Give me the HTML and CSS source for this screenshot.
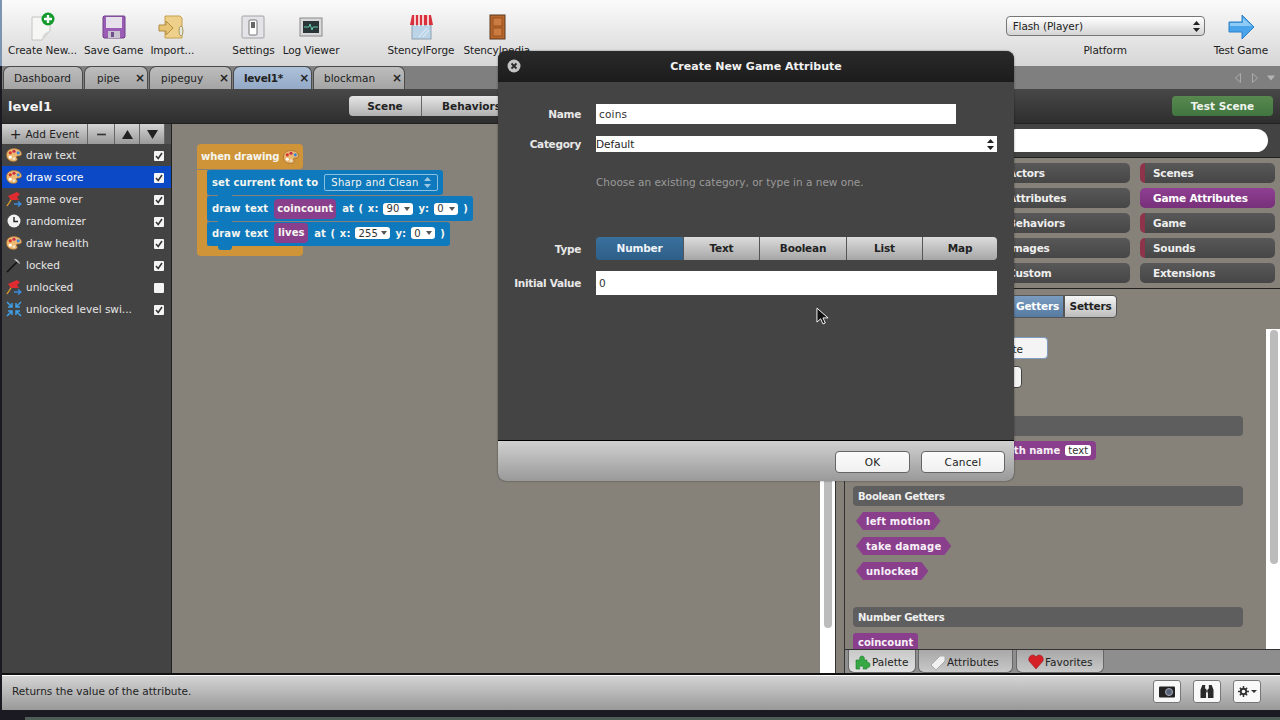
FILE: index.html
```html
<!DOCTYPE html>
<html lang="en">
<head>
    <meta charset="UTF-8">
    <meta name="viewport" content="width=device-width, initial-scale=1.0">
    <title>Stencyl - level1</title>
    <link rel="stylesheet" href="styles.css">
</head>
<body>
    <svg class="defs" width="0" height="0">
        <symbol id="i-palette" viewBox="0.5 1.5 15 13">
            <path d="M1 8c0-4 3-6 7-6s7 2 7 5c0 2-2 2-3.500 2-1.500 0-1.500 1.500-.5 2.500.5 1.500-1 2.500-3.500 2.500C3.500 14 1 11.500 1 8z" fill="#edb871" stroke="#9a6a30" stroke-width=".7"/>
            <circle cx="4.500" cy="6" r="1.500" fill="#d8342c"/>
            <circle cx="8" cy="4.500" r="1.500" fill="#c62f50"/>
            <circle cx="12" cy="6" r="1.500" fill="#3b88d8"/>
            <circle cx="4.500" cy="10" r="1.400" fill="#fff"/>
            <circle cx="8" cy="11.500" r="1.300" fill="#e9e2c8"/>
        </symbol>
        <symbol id="i-flag" viewBox="0 0 16 16">
            <path d="M1 15L7 6" stroke="#e8a030" stroke-width="1.300" fill="none"/>
            <path d="M2 5l9-4 3 2-3 3 2 3-8 0z" fill="#e02c30"/>
            <path d="M8 13h6M12 10.500l3 2.500-3 2.500" stroke="#3d8be0" stroke-width="1.400" fill="none"/>
        </symbol>
        <symbol id="i-check" viewBox="0 0 10 10">
            <path d="M2 5l2.200 2.500L8 2" stroke="#333" stroke-width="1.500" fill="none"/>
        </symbol>
    </svg>

    <div class="app">
        <header class="toolbar">
            <div class="tool">
                <svg class="tool-icon" viewBox="0 0 32 32">
                    <path d="M6 6h18v14l-8 9H6z" fill="#f6f6f4" stroke="#c4c4c4"/>
                    <path d="M16 29c0-5 3-8 8-9z" fill="#d8d8d8"/>
                    <circle cx="22" cy="8" r="6.500" fill="#149a2c"/>
                    <path d="M22 4v8M18 8h8" stroke="#fff" stroke-width="2.400"/>
                </svg>
                <span>Create New...</span>
            </div>
            <div class="tool">
                <svg class="tool-icon" viewBox="0 0 32 32">
                    <path d="M6 5h20a1 1 0 0 1 1 1v20l-1 1H6l-1-1V6z" fill="#9a5cb4" stroke="#70408a"/>
                    <rect x="8" y="6" width="16" height="11" fill="#e6e0ea"/>
                    <rect x="10" y="20" width="12" height="7" fill="#c9c2cf"/>
                    <rect x="13" y="21" width="3" height="5" fill="#70508a"/>
                </svg>
                <span>Save Game</span>
            </div>
            <div class="tool">
                <svg class="tool-icon" viewBox="0 0 32 32">
                    <path d="M9 5h15l2 2v20H9z" fill="#eed08a" stroke="#c4a050"/>
                    <path d="M3 14h7v-4l7 7-7 7v-4H3z" fill="#e6c474" stroke="#b08c40"/>
                    <ellipse cx="25" cy="20" rx="2" ry="5" fill="#e6e6d8" stroke="#a89860"/>
                </svg>
                <span>Import...</span>
            </div>
            <div class="tool group-start">
                <svg class="tool-icon" viewBox="0 0 32 32">
                    <rect x="5" y="5" width="22" height="22" rx="1" fill="#e4e4e8" stroke="#a4a4a8"/>
                    <rect x="12" y="9" width="8" height="15" rx="1" fill="#fff" stroke="#777"/>
                    <rect x="14" y="11" width="4" height="6" fill="#666"/>
                </svg>
                <span>Settings</span>
            </div>
            <div class="tool tool-log">
                <svg class="tool-icon" viewBox="0 0 32 32">
                    <rect x="5" y="7" width="22" height="18" fill="#d8d8d8" stroke="#8a8a8a"/>
                    <rect x="8" y="10" width="16" height="12" fill="#2a3538"/>
                    <path d="M9 16h5l1-3 2 6 1-3h5" stroke="#62c8a8" fill="none"/>
                </svg>
                <span>Log Viewer</span>
            </div>
            <div class="tool group-wide">
                <svg class="tool-icon" viewBox="0 0 32 32">
                    <rect x="7" y="14" width="19" height="14" fill="#bcd4e8" stroke="#8ea0b0"/>
                    <path d="M14 26l8-9M18 26l6-7" stroke="#e8f2fa"/>
                    <path d="M7 4h19l2 10H5z" fill="#d8303c"/>
                    <path d="M10 4v11M14 4v11M18 4v11M23 4v11" stroke="#fff" stroke-width="1.500"/>
                </svg>
                <span>StencylForge</span>
            </div>
            <div class="tool tool-pedia">
                <svg class="tool-icon" viewBox="0 0 32 32">
                    <rect x="9" y="4" width="15" height="24" fill="#b8672c" stroke="#5a3a20"/>
                    <rect x="12" y="7" width="9" height="8" fill="#cc7c40" stroke="#96521f"/>
                    <rect x="12" y="17" width="9" height="8" fill="#cc7c40" stroke="#96521f"/>
                </svg>
                <span>Stencylpedia</span>
            </div>
            <div class="tool platform">
                <div class="platform-select">
                    <span>Flash (Player)</span>
                    <svg class="updown" viewBox="0 0 7 11"><path d="M3.500 0L7 4H0zM3.500 11L0 7h7z" fill="#222"/></svg>
                </div>
                <span>Platform</span>
            </div>
            <div class="tool test-game">
                <svg class="tool-icon" viewBox="0 0 32 32">
                    <path d="M4 11h13V4l12 12-12 12v-7H4z" fill="#4aa4ea" stroke="#2c80c8"/>
                    <path d="M5 12h13V7l9 8H5z" fill="#8ecbf6"/>
                </svg>
                <span>Test Game</span>
            </div>
        </header>

        <nav class="tabbar">
            <div class="tab tab-home">Dashboard</div>
            <div class="tab tab-pipe"><span>pipe</span><b>×</b></div>
            <div class="tab tab-pipeguy"><span>pipeguy</span><b>×</b></div>
            <div class="tab tab-level active"><span>level1*</span><b>×</b></div>
            <div class="tab tab-blockman"><span>blockman</span><b>×</b></div>
            <div class="tab-arrows">
                <svg viewBox="0 0 6 10"><path d="M5.500 .5L.5 5l5 4.500z" fill="none" stroke="#aaa"/></svg>
                <svg viewBox="0 0 6 10"><path d="M.5 .5L5.500 5 .5 9.500z" fill="none" stroke="#aaa"/></svg>
                <svg class="arrow-down" viewBox="0 0 10 6"><path d="M0 0h10L5 6z" fill="#b4b4b4"/></svg>
            </div>
        </nav>

        <div class="scene-head">
            <div class="scene-title">level1</div>
            <div class="scene-modes">
                <div class="mode">Scene</div>
                <div class="mode mode-wide">Behaviors</div>
            </div>
            <div class="test-scene">Test Scene</div>
        </div>

        <main class="workspace">
            <aside class="events">
                <div class="events-bar">
                    <div class="ev-btn ev-add"><b>+</b> Add Event</div>
                    <div class="ev-btn ev-small"><svg viewBox="0 0 10 10"><path d="M1 5h8" stroke="#333" stroke-width="1.500"/></svg></div>
                    <div class="ev-btn ev-small"><svg viewBox="0 0 10 10"><path d="M5 1l5 8H0z" fill="#222"/></svg></div>
                    <div class="ev-btn ev-small"><svg viewBox="0 0 10 10"><path d="M5 9L0 1h10z" fill="#222"/></svg></div>
                </div>
                <div class="event"><svg class="ev-icon"><use href="#i-palette"/></svg><span>draw text</span><i class="box"><svg><use href="#i-check"/></svg></i></div>
                <div class="event selected"><svg class="ev-icon"><use href="#i-palette"/></svg><span>draw score</span><i class="box"><svg><use href="#i-check"/></svg></i></div>
                <div class="event"><svg class="ev-icon"><use href="#i-flag"/></svg><span>game over</span><i class="box"><svg><use href="#i-check"/></svg></i></div>
                <div class="event">
                    <svg class="ev-icon" viewBox="0 0 16 16"><circle cx="8" cy="8" r="6.500" fill="#f2f2f2"/><path d="M8 4v4.500h4" stroke="#222" stroke-width="1.400" fill="none"/></svg>
                    <span>randomizer</span><i class="box"><svg><use href="#i-check"/></svg></i>
                </div>
                <div class="event"><svg class="ev-icon"><use href="#i-palette"/></svg><span>draw health</span><i class="box"><svg><use href="#i-check"/></svg></i></div>
                <div class="event">
                    <svg class="ev-icon" viewBox="0 0 16 16"><path d="M1 15L11 5" stroke="#111" stroke-width="1.600"/><path d="M8 2c3 0 5 2 6 5l-4-3z" fill="#ddd" stroke="#999" stroke-width=".5"/></svg>
                    <span>locked</span><i class="box"><svg><use href="#i-check"/></svg></i>
                </div>
                <div class="event"><svg class="ev-icon"><use href="#i-flag"/></svg><span>unlocked</span><i class="box"></i></div>
                <div class="event">
                    <svg class="ev-icon" viewBox="0 0 16 16"><path d="M1 1l5 5M6 2v4H2M15 1l-5 5M10 2v4h4M1 15l5-5M6 14v-4H2M15 15l-5-5M10 14v-4h4" stroke="#3fa0e8" stroke-width="1.500" fill="none"/></svg>
                    <span>unlocked level swi...</span><i class="box"><svg><use href="#i-check"/></svg></i>
                </div>
            </aside>

            <section class="canvas">
                <div class="hat">
                    <div class="hat-head">when drawing <svg class="hat-icon"><use href="#i-palette"/></svg></div>
                    <div class="hat-body">
                        <div class="stmt stmt-first">set current font to <span class="font-pick">Sharp and Clean <svg class="updown" viewBox="0 0 7 11"><path d="M3.500 0L7 4H0zM3.500 11L0 7h7z" fill="#9cc8e4"/></svg></span></div>
                        <div class="stmt">draw text <span class="attr attr-wide">coincount</span> at ( x: <span class="num num-90">90<em></em></span> y: <span class="num">0<em></em></span> )</div>
                        <div class="stmt stmt-last">draw text <span class="attr">lives</span> at ( x: <span class="num num-255">255<em></em></span> y: <span class="num">0<em></em></span> )</div>
                    </div>
                    <div class="hat-foot"></div>
                </div>
            </section>

            <div class="canvas-scroll"><div class="thumb thumb-canvas"></div></div>
            <div class="gutter"></div>

            <section class="palette">
                <div class="search-row"><div class="search"></div></div>
                <div class="categories">
                    <div class="cat-col">
                        <div class="cat mark">Actors</div>
                        <div class="cat mark">Attributes</div>
                        <div class="cat mark">Behaviors</div>
                        <div class="cat mark">Images</div>
                        <div class="cat">Custom</div>
                    </div>
                    <div class="cat-col">
                        <div class="cat mark">Scenes</div>
                        <div class="cat cat-on">Game Attributes</div>
                        <div class="cat mark">Game</div>
                        <div class="cat mark">Sounds</div>
                        <div class="cat">Extensions</div>
                    </div>
                </div>
                <div class="filters">
                    <div class="filter filter-on">Getters</div>
                    <div class="filter">Setters</div>
                </div>
                <div class="palette-main">
                    <div class="blocks">
                        <div class="attr-btn attr-btn-blue">Create</div>
                        <div class="attr-btn attr-btn-plain"></div>
                        <div class="section section-first">Getters</div>
                        <div class="getter-row"><span class="getter-pill">get attribute with name <span class="slot">text</span></span></div>
                        <div class="section">Boolean Getters</div>
                        <div class="hex">left motion</div>
                        <div class="hex">take damage</div>
                        <div class="hex">unlocked</div>
                        <div class="section section-num">Number Getters</div>
                        <div class="num-getter">coincount</div>
                    </div>
                    <div class="palette-scroll"><div class="thumb thumb-palette"></div></div>
                </div>
                <div class="palette-tabs">
                    <div class="ptab ptab-on">
                        <svg viewBox="0 0 16 16"><path d="M1 6h4c-1-2 0-4 2-4s3 2 2 4h3v3c2-1 3 0 3 2s-1 3-3 2v2H8c1-2 0-3-2-3s-2 2-1 3H1z" fill="#36a844" stroke="#1e7a2c" stroke-width=".6"/></svg>
                        Palette
                    </div>
                    <div class="ptab ptab-attr">
                        <svg viewBox="0 0 16 16"><path d="M1 11L10 2h5v5l-9 9z" fill="#f0f0f0" stroke="#aaa"/></svg>
                        Attributes
                    </div>
                    <div class="ptab ptab-fav">
                        <svg viewBox="0 0 16 16"><path d="M8 15L1 7c-1-3 1-6 4-6 1.500 0 2.500 1 3 2 .5-1 1.500-2 3-2 3 0 5 3 4 6z" fill="#d62028" stroke="#8c1418" stroke-width=".5"/></svg>
                        Favorites
                    </div>
                </div>
            </section>
        </main>

        <footer class="status">
            <span>Returns the value of the attribute.</span>
            <div class="status-btns">
                <div class="status-btn">
                    <svg viewBox="0 0 16 12"><rect x="0" y="1" width="16" height="11" rx="1" fill="#222"/><circle cx="10" cy="6.500" r="3.500" fill="#5a6478" stroke="#aab"/></svg>
                </div>
                <div class="status-btn">
                    <svg viewBox="0 0 16 14"><path d="M3 0h3v4h1v10H1V5zM10 0h3l2 5v9H9V4h1z" fill="#2a2a2a"/><rect x="7" y="5" width="2" height="3" fill="#555"/></svg>
                </div>
                <div class="status-btn">
                    <svg class="gear" viewBox="0 0 12 12"><circle cx="6" cy="6" r="3" fill="none" stroke="#333" stroke-width="2"/><path d="M6 0v3M6 9v3M0 6h3M9 6h3M2 2l2 2M8 8l2 2M10 2L8 4M4 8l-2 2" stroke="#333" stroke-width="1.600"/></svg>
                    <svg class="caret" viewBox="0 0 6 3"><path d="M0 0h6L3 3z" fill="#333"/></svg>
                </div>
            </div>
        </footer>
    </div>
    <div class="desktop-strip"></div>

    <div class="dialog">
        <div class="dialog-title">
            <svg class="dialog-close" viewBox="0 0 14 14"><circle cx="7" cy="7" r="6.500" fill="#c4c4c4"/><path d="M4.500 4.500l5 5M9.500 4.500l-5 5" stroke="#2a2a2a" stroke-width="1.800"/></svg>
            Create New Game Attribute
        </div>
        <div class="dialog-body">
            <div class="field field-name">
                <label>Name</label>
                <input class="text-input name-input" type="text" value="coins">
            </div>
            <div class="field field-category">
                <label>Category</label>
                <div class="combo">Default <svg class="updown" viewBox="0 0 7 11"><path d="M3.500 0L7 4H0zM3.500 11L0 7h7z" fill="#222"/></svg></div>
            </div>
            <p class="hint">Choose an existing category, or type in a new one.</p>
            <div class="field field-type">
                <label>Type</label>
                <div class="types">
                    <div class="type type-on">Number</div>
                    <div class="type">Text</div>
                    <div class="type type-mid">Boolean</div>
                    <div class="type">List</div>
                    <div class="type">Map</div>
                </div>
            </div>
            <div class="field field-value">
                <label>Initial Value</label>
                <input class="text-input value-input" type="text" value="0">
            </div>
        </div>
        <div class="dialog-foot">
            <div class="dlg-btn dlg-ok">OK</div>
            <div class="dlg-btn dlg-cancel">Cancel</div>
        </div>
    </div>

    <svg class="cursor" viewBox="0 0 14 20"><path d="M1 1v15l4-3.500 2.500 5.500 2.500-1-2.500-5.500H13z" fill="#111" stroke="#fff"/></svg>
</body>
</html>
```

FILE: styles.css
```css
* {
    box-sizing: border-box;
}
html, body {
    margin: 0;
    height: 720px;
    overflow: hidden;
}
body {
    position: relative;
    font-family: "DejaVu Sans", sans-serif;
    font-size: 10.5px;
    color: #222;
    background: linear-gradient(#7c93b2 0, #7c93b2 66px, #1b1a22 66px, #1b1a22 100%);
}
.defs {
    position: absolute;
}
.app {
    margin-left: 2px;
    height: 710px;
    display: flex;
    flex-direction: column;
}

/* top toolbar */
.toolbar {
    height: 66px;
    flex: none;
    display: flex;
    padding: 11px 12px 0 6px;
    background: linear-gradient(#fbfbfb, #d6d6d6);
}
.tool {
    display: flex;
    flex-direction: column;
    align-items: center;
    margin-right: 7px;
    white-space: nowrap;
    letter-spacing: -.1px;
}
.tool-icon {
    width: 32px;
    height: 32px;
    margin-bottom: 1px;
}
.group-start {
    margin-left: 31px;
}
.tool-log {
    margin-left: 1px;
}
.group-wide {
    margin-left: 41px;
}
.tool-pedia {
    margin-left: 2px;
}
.platform {
    width: 199px;
    margin-left: auto;
    margin-right: 9px;
    margin-top: 5px;
}
.platform-select {
    width: 199px;
    height: 20px;
    margin-bottom: 8px;
    padding: 0 4px 0 6px;
    display: flex;
    align-items: center;
    justify-content: space-between;
    border: 1px solid #777;
    border-radius: 4px;
    background: linear-gradient(#fff, #d4d4d4);
}
.updown {
    width: 7px;
    height: 11px;
    flex: none;
}
.test-game {
    margin-right: 0;
}

/* tabs */
.tabbar {
    height: 23px;
    flex: none;
    display: flex;
    padding-left: 1px;
    background: #7f7f7f;
}
.tab {
    height: 23px;
    margin-right: 1px;
    padding: 0 2px 0 12px;
    display: flex;
    align-items: center;
    justify-content: space-between;
    border: 1px solid #4a4a4a;
    border-bottom: 0;
    border-radius: 7px 7px 0 0;
    background: linear-gradient(#bdbdbd, #a4a4a4);
    color: #222;
}
.tab b {
    font-size: 12px;
    line-height: 1;
}
.tab-home {
    width: 80px;
    padding-left: 10px;
}
.tab-pipe {
    width: 64px;
}
.tab-pipeguy {
    width: 83px;
    padding-left: 11px;
}
.tab-level {
    width: 79px;
    padding-left: 10px;
    font-weight: bold;
    letter-spacing: -.3px;
}
.tab-blockman {
    width: 92px;
    padding-left: 10px;
}
.active {
    background: linear-gradient(#aec1da, #93a9c6);
}
.tab-arrows {
    margin-left: auto;
    padding-right: 5px;
    display: flex;
    align-items: center;
    gap: 11px;
}
.tab-arrows svg {
    width: 6px;
    height: 10px;
}
.tab-arrows .arrow-down {
    width: 8px;
    height: 6px;
    margin-left: -2px;
}

/* scene header */
.scene-head {
    height: 34px;
    flex: none;
    display: flex;
    align-items: center;
    padding: 0 7px 0 6px;
    background: linear-gradient(#484848, #2e2e2e);
}
.scene-title {
    width: 341px;
    font-size: 13px;
    font-weight: bold;
    color: #f4f4f4;
}
.scene-modes {
    display: flex;
}
.mode {
    width: 73px;
    height: 20px;
    line-height: 20px;
    text-align: center;
    font-weight: bold;
    border-radius: 4px 0 0 4px;
    border-right: 1px solid #666;
    background: linear-gradient(#e6e6e6, #b0b0b0);
}
.mode-wide {
    width: 100px;
    border-radius: 0;
}
.test-scene {
    width: 101px;
    height: 20px;
    margin-left: auto;
    line-height: 20px;
    text-align: center;
    font-weight: bold;
    color: #f0f4ee;
    border-radius: 4px;
    background: linear-gradient(#58894f, #417540);
}

/* body of the window */
.workspace {
    flex: 1;
    min-height: 0;
    display: flex;
    border-top: 1px solid #222;
    border-bottom: 2px solid #111;
}
.events {
    width: 170px;
    flex: none;
    background: #434343;
    border-right: 1px solid #222;
}
.events-bar {
    height: 20px;
    display: flex;
    background: #555;
}
.ev-btn {
    height: 20px;
    display: flex;
    align-items: center;
    justify-content: center;
    border-right: 1px solid #666;
    background: linear-gradient(#d4d4d4, #9a9a9a);
}
.ev-add {
    width: 86px;
}
.ev-add b {
    margin-right: 4px;
    font-size: 14px;
    font-weight: normal;
}
.ev-small {
    width: 27px;
}
.ev-small + .ev-small {
    width: 25px;
}
.ev-small svg {
    width: 11px;
    height: 11px;
}
.event {
    height: 22px;
    padding: 0 7px 0 4px;
    display: flex;
    align-items: center;
    color: #e6e6e6;
}
.event span {
    flex: 1;
    margin-left: 4px;
    white-space: nowrap;
}
.selected {
    background: #0b49c6;
    color: #fff;
}
.ev-icon {
    width: 16px;
    height: 16px;
    flex: none;
}
.box {
    width: 10px;
    height: 10px;
    margin-top: 1px;
    flex: none;
    background: #f4f4f4;
    border-radius: 1px;
}
.box svg {
    display: block;
    width: 10px;
    height: 10px;
}

/* block canvas */
.canvas {
    position: relative;
    width: 648px;
    flex: none;
    background: #86827a;
}
.hat {
    position: absolute;
    left: 25px;
    top: 20px;
    font-size: 10px;
    font-weight: bold;
    color: #f6f6f0;
    white-space: nowrap;
}
.hat-head {
    width: 106px;
    height: 25px;
    margin-bottom: 1px;
    padding-left: 4px;
    display: flex;
    align-items: center;
    gap: 4px;
    background: #cf9438;
    border-radius: 4px 4px 4px 0;
    letter-spacing: -.1px;
}
.hat-icon {
    width: 16px;
    height: 16px;
}
.hat-body {
    display: flex;
    flex-direction: column;
    align-items: flex-start;
    gap: 1px;
    border-left: 10px solid #cf9438;
}
.stmt {
    height: 25px;
    padding: 0 5px;
    display: flex;
    align-items: center;
    gap: 5px;
    background: #0e79bd;
    border-radius: 3px;
    position: relative;
    letter-spacing: .1px;
    word-spacing: 1px;
}
.stmt-first {
    gap: 6px;
    word-spacing: 0;
}
.stmt-last {
    height: 24px;
    padding-bottom: 2px;
}
.stmt::after {
    content: "";
    position: absolute;
    left: 11px;
    bottom: -4px;
    width: 14px;
    height: 5px;
    background: #0e79bd;
    border-radius: 0 0 3px 3px;
    z-index: 1;
}
.font-pick {
    width: 114px;
    height: 17px;
    padding: 0 6px;
    display: flex;
    align-items: center;
    justify-content: space-between;
    font-weight: normal;
    letter-spacing: .3px;
    word-spacing: 0;
    border: 1px solid #8cc0e0;
    border-radius: 2px;
}
.attr {
    width: 34px;
    height: 20px;
    margin: 0 1px;
    line-height: 20px;
    text-align: center;
    background: #8a3f8c;
    border-radius: 4px;
}
.attr-wide {
    width: 62px;
}
.num {
    width: 24px;
    height: 12px;
    padding: 0 3px;
    display: flex;
    align-items: center;
    justify-content: space-between;
    color: #333;
    font-weight: normal;
    background: #fff;
    border-radius: 3px;
}
.num-90 {
    width: 30px;
}
.num-255 {
    width: 35px;
}
.num em {
    border: 3px solid transparent;
    border-top: 4px solid #555;
    border-bottom: 0;
}
.hat-foot {
    width: 106px;
    height: 10px;
    background: #cf9438;
    border-radius: 0 0 4px 4px;
}

.canvas-scroll {
    width: 15px;
    flex: none;
    padding: 4px;
    background: #fff;
}
.thumb {
    width: 8px;
    background: #bcbcbc;
    border-radius: 4px;
}
.thumb-canvas {
    height: 500px;
}
.gutter {
    width: 10px;
    flex: none;
    background: #86827a;
    border-left: 1px solid #333;
    border-right: 1px solid #333;
}

/* right hand palette */
.palette {
    flex: 1;
    min-width: 0;
    display: flex;
    flex-direction: column;
    background: #86827a;
}
.search-row {
    height: 34px;
    padding: 5px 12px 0 160px;
    background: #434343;
    border-bottom: 1px solid #222;
}
.search {
    height: 23px;
    background: #fff;
    border-radius: 12px;
}
.categories {
    height: 131px;
    flex: none;
    display: flex;
    justify-content: flex-end;
    gap: 10px;
    padding: 5px 5px 0 0;
    border-bottom: 1px solid #222;
}
.cat-col {
    width: 135px;
    display: flex;
    flex-direction: column;
    gap: 5px;
}
.cat {
    height: 20px;
    line-height: 21px;
    padding-left: 13px;
    font-weight: bold;
    letter-spacing: -.2px;
    color: #eeeeee;
    border-radius: 5px;
    background: linear-gradient(#585858, #464646);
}
.mark {
    border-left: 5px solid #8e3349;
    padding-left: 8px;
}
.cat-on {
    color: #fff;
    background: linear-gradient(#8f3f92, #773079);
}
.filters {
    height: 40px;
    flex: none;
    display: flex;
    justify-content: flex-start;
    padding: 6px 0 0 166px;
}
.filter {
    width: 53px;
    height: 23px;
    line-height: 20px;
    text-align: center;
    font-weight: bold;
    letter-spacing: -.2px;
    border: 1px solid #555;
    border-radius: 0 4px 4px 0;
    background: linear-gradient(#f6f6f6, #bcbcbc);
}
.filter-on {
    color: #fff;
    border-radius: 4px 0 0 4px;
    background: linear-gradient(#7a9cc0, #567aa0);
}
.palette-main {
    flex: 1;
    min-height: 0;
    display: flex;
    overflow: hidden;
}
.blocks {
    flex: 1;
    min-width: 0;
    padding: 8px 23px 0 8px;
}
.attr-btn {
    height: 22px;
    line-height: 22px;
    padding-right: 24px;
    text-align: right;
    background: #f4f4f4;
    border-radius: 4px;
}
.attr-btn-blue {
    width: 195px;
    border: 1px solid #7f9cc0;
}
.attr-btn-plain {
    width: 169px;
    margin-top: 7px;
    border: 1px solid #444;
}
.section {
    height: 20px;
    line-height: 21px;
    padding-left: 5px;
    font-size: 10px;
    font-weight: bold;
    letter-spacing: -.3px;
    color: #f0f0f0;
    background: #5e5e5e;
    border-radius: 4px;
}
.section-first {
    margin-top: 28px;
}
.getter-row {
    height: 50px;
    padding: 5px 0 0 20px;
}
.getter-pill {
    display: inline-flex;
    align-items: center;
    gap: 5px;
    height: 19px;
    padding: 0 5px;
    font-size: 10px;
    font-weight: bold;
    color: #f6f0f6;
    white-space: nowrap;
    background: #8a3f8c;
    border-radius: 4px;
    margin-left: 47px;
}
.slot {
    padding: 0 3px;
    font-weight: normal;
    color: #333;
    background: #fff;
    border-radius: 3px;
}
.hex {
    width: fit-content;
    height: 18px;
    line-height: 19px;
    margin: 6px 0 7px 3px;
    padding: 0 10px;
    font-size: 10px;
    font-weight: bold;
    letter-spacing: .2px;
    color: #f8f0f8;
    background: #8a3f8c;
    clip-path: polygon(7px 0, calc(100% - 7px) 0, 100% 50%, calc(100% - 7px) 100%, 7px 100%, 0 50%);
}
.hex + .hex {
    margin-top: 0;
}
.section-num {
    margin-top: 27px;
}
.num-getter {
    width: fit-content;
    height: 18px;
    line-height: 19px;
    margin-top: 6px;
    padding: 0 5px;
    font-size: 10px;
    font-weight: bold;
    color: #f8f0f8;
    background: #8a3f8c;
    border-radius: 3px;
}
.palette-scroll {
    width: 14px;
    flex: none;
    padding: 1px 2px 0 4px;
    background: #fff;
}
.thumb-palette {
    height: 234px;
}
.palette-tabs {
    height: 24px;
    flex: none;
    display: flex;
    gap: 2px;
    padding-left: 3px;
    background: #8e8e8e;
    border-top: 1px solid #333;
}
.ptab {
    width: 68px;
    display: flex;
    align-items: center;
    gap: 1px;
    padding: 1px 0 0 6px;
    border: 1px solid #666;
    border-top: 0;
    border-radius: 0 0 6px 6px;
    background: linear-gradient(#a8a8a8, #c8c8c8);
}
.ptab svg {
    width: 16px;
    height: 16px;
    flex: none;
}
.ptab-on {
    background: linear-gradient(#c8c8c8, #e0e0e0);
}
.ptab-attr {
    width: 95px;
    padding-left: 11px;
}
.ptab-fav {
    width: 88px;
    margin-left: 1px;
    padding-left: 11px;
}

/* status bar */
.status {
    height: 35px;
    flex: none;
    display: flex;
    align-items: center;
    justify-content: space-between;
    padding: 0 19px 4px 10px;
    background: linear-gradient(#d4d4d4, #999);
    border-top: 1px solid #fff;
}
.status-btns {
    display: flex;
    gap: 12px;
}
.status-btn {
    width: 28px;
    height: 23px;
    display: flex;
    align-items: center;
    justify-content: center;
    gap: 2px;
    background: #f8f8f8;
    border: 1px solid #777;
    border-radius: 3px;
}
.status-btn svg {
    width: 16px;
    height: 13px;
}
.status-btn .gear {
    width: 11px;
    height: 11px;
}
.status-btn .caret {
    width: 6px;
    height: 3px;
}
.desktop-strip {
    width: 1255px;
    height: 3px;
    margin: 7px 0 0 25px;
    background: #4e5d56;
}

/* modal dialog */
.dialog {
    position: absolute;
    left: 498px;
    top: 51px;
    width: 516px;
    height: 430px;
    display: flex;
    flex-direction: column;
    border-radius: 8px;
    overflow: hidden;
    background: #444;
    box-shadow: 0 0 2px rgba(0, 0, 0, .5);
}
.dialog-title {
    position: relative;
    height: 31px;
    flex: none;
    line-height: 32px;
    text-align: center;
    font-size: 11px;
    font-weight: bold;
    color: #f2f2f2;
    background: linear-gradient(#2a2a2a, #1c1c1c);
}
.dialog-close {
    position: absolute;
    left: 9px;
    top: 8px;
    width: 14px;
    height: 14px;
}
.dialog-body {
    flex: 1;
    padding-right: 17px;
}
.field {
    display: flex;
    align-items: center;
}
.field label {
    width: 83px;
    margin-right: 15px;
    flex: none;
    text-align: right;
    font-weight: bold;
    letter-spacing: -.3px;
    color: #e8e8e8;
}
.field-name {
    margin-top: 22px;
}
.field-category {
    margin-top: 12px;
}
.field-type {
    margin-top: 48px;
}
.field-value {
    margin-top: 11px;
}
.text-input {
    padding: 0 3px;
    border: 0;
    outline: 0;
    font: inherit;
    color: #333;
    letter-spacing: .2px;
    background: #fff;
}
.name-input {
    width: 360px;
    height: 20px;
}
.value-input {
    width: 401px;
    height: 24px;
}
.combo {
    width: 401px;
    height: 16px;
    padding: 0 3px 0 0;
    display: flex;
    align-items: center;
    justify-content: space-between;
    color: #222;
    background: #fff;
}
.hint {
    margin: 23px 0 0 98px;
    height: 14px;
    line-height: 14px;
    color: #9a9a9a;
}
.types {
    width: 401px;
    height: 23px;
    display: flex;
    border-radius: 4px;
    overflow: hidden;
    background: #555;
}
.type {
    width: 75px;
    line-height: 23px;
    margin-right: 1px;
    text-align: center;
    font-weight: bold;
    letter-spacing: -.2px;
    color: #222;
    background: linear-gradient(#dcdcdc, #a6a6a6);
}
.type:last-child {
    margin-right: 0;
    flex: 1;
}
.type-on {
    width: 87px;
    color: #f0f4f8;
    background: linear-gradient(#39709c, #2e5f88);
}
.type-mid {
    width: 86px;
}
.dialog-foot {
    height: 41px;
    flex: none;
    display: flex;
    justify-content: flex-end;
    align-items: center;
    gap: 11px;
    padding: 2px 9px 0 0;
    background: linear-gradient(#d0d0d0, #999);
    border-top: 1px solid #000;
}
.dlg-btn {
    height: 22px;
    line-height: 20px;
    text-align: center;
    letter-spacing: .2px;
    background: linear-gradient(#fbfbfb, #f0f0f0);
    border: 1px solid #666;
    border-radius: 4px;
}
.dlg-ok {
    width: 75px;
}
.dlg-cancel {
    width: 84px;
}
.cursor {
    position: absolute;
    left: 816px;
    top: 307px;
    width: 13px;
    height: 19px;
}
```
